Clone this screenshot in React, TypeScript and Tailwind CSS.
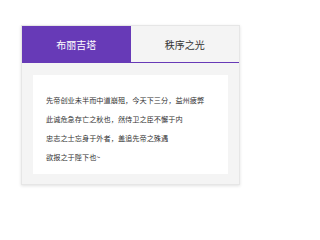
import { useState } from "react";

const tabs = ["布丽吉塔", "秩序之光"];

const lines = [
  "先帝创业未半而中道崩殂，今天下三分，益州疲弊",
  "此诚危急存亡之秋也，然侍卫之臣不懈于内",
  "忠志之士忘身于外者，盖追先帝之殊遇",
  "欲报之于陛下也~",
];

export default function App() {
  const [active, setActive] = useState(0);

  return (
    <div
      className="h-[209px] w-[264px] bg-white pt-[25px] pl-[21px]"
      style={{ fontFamily: '"Noto Sans CJK SC", "Noto Sans", sans-serif' }}
    >
      <div className="w-[219px] border border-[#e6e6e6] bg-[#f4f4f4] shadow-[0_1px_3px_rgba(0,0,0,0.12)]">
        <div className="flex h-[37px] border-b border-[#673ab7]">
          {tabs.map((tab, i) => (
            <button
              key={tab}
              onClick={() => setActive(i)}
              className={
                i === active
                  ? "flex flex-1 items-center justify-center bg-[#673ab7] text-[10px] text-white"
                  : "flex flex-1 items-center justify-center bg-[#f4f4f4] text-[10px] text-[#333]"
              }
            >
              {tab}
            </button>
          ))}
        </div>
        <div className="px-[11px] pt-[12px] pb-[10px]">
          <div className="h-[99px] bg-white pt-[16px] pl-[13px]">
            {lines.map((line) => (
              <p
                key={line}
                className="h-[19px] text-[7.2px] leading-[19px] whitespace-nowrap text-[#333]"
              >
                {line}
              </p>
            ))}
          </div>
        </div>
      </div>
    </div>
  );
}
